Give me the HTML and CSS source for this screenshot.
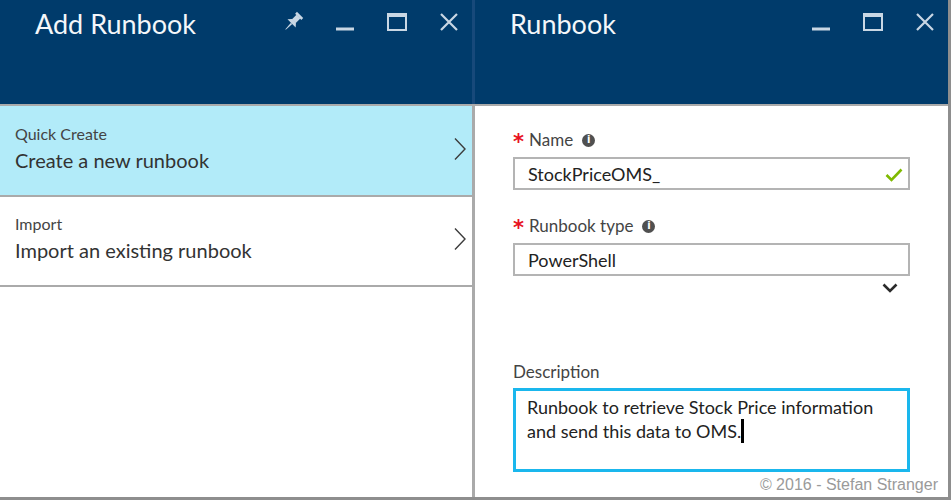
FILE: index.html
```html
<!DOCTYPE html>
<html lang="en">
<head>
<meta charset="utf-8">
<title>Add Runbook</title>
<link rel="stylesheet" href="styles.css">
</head>
<body>
<div class="screen">
  <section class="blade blade-left">
    <header class="bhead">
      <h1 class="btitle">Add Runbook</h1>
      <div class="ctrls">
        <span class="ctrl">
          <svg width="22" height="22" viewBox="0 0 22 22"><g transform="rotate(45 11 11)" fill="#c9d7e4"><rect x="6.6" y="1" width="8.8" height="2.6"/><rect x="8.3" y="3.4" width="5.4" height="6.6"/><polygon points="5.2,13 16.8,13 13.7,9.6 8.3,9.6"/><polygon points="10.1,13 11.9,13 11.3,21.5 10.7,21.5"/></g></svg>
        </span>
        <span class="ctrl">
          <svg width="20" height="20" viewBox="0 0 20 20"><rect x="1" y="15.5" width="18" height="3" fill="#c9d7e4"/></svg>
        </span>
        <span class="ctrl">
          <svg width="22" height="20" viewBox="0 0 22 20"><path d="M1 1h20v18H1z M3 5v12h16V5z" fill="#c9d7e4" fill-rule="evenodd"/></svg>
        </span>
        <span class="ctrl">
          <svg width="20" height="20" viewBox="0 0 20 20"><path d="M2 2L18 18M18 2L2 18" stroke="#c9d7e4" stroke-width="2.2" fill="none"/></svg>
        </span>
      </div>
    </header>
    <ul class="menu">
      <li class="mitem mitem-active">
        <div class="mtext">
          <div class="msub">Quick Create</div>
          <div class="mmain">Create a new runbook</div>
        </div>
        <svg class="chev" width="14" height="24" viewBox="0 0 14 24"><path d="M2 1.5L12 12L2 22.5" stroke="#3c3c3c" stroke-width="1.4" fill="none"/></svg>
      </li>
      <li class="mitem">
        <div class="mtext">
          <div class="msub">Import</div>
          <div class="mmain">Import an existing runbook</div>
        </div>
        <svg class="chev" width="14" height="24" viewBox="0 0 14 24"><path d="M2 1.5L12 12L2 22.5" stroke="#3c3c3c" stroke-width="1.4" fill="none"/></svg>
      </li>
    </ul>
  </section>
  <div class="divider"></div>
  <section class="blade blade-right">
    <header class="bhead">
      <h1 class="btitle">Runbook</h1>
      <div class="ctrls">
        <span class="ctrl">
          <svg width="20" height="20" viewBox="0 0 20 20"><rect x="1" y="15.5" width="18" height="3" fill="#c9d7e4"/></svg>
        </span>
        <span class="ctrl">
          <svg width="22" height="20" viewBox="0 0 22 20"><path d="M1 1h20v18H1z M3 5v12h16V5z" fill="#c9d7e4" fill-rule="evenodd"/></svg>
        </span>
        <span class="ctrl">
          <svg width="20" height="20" viewBox="0 0 20 20"><path d="M2 2L18 18M18 2L2 18" stroke="#c9d7e4" stroke-width="2.2" fill="none"/></svg>
        </span>
      </div>
    </header>
    <form class="form">
      <div class="field">
        <div class="flabel"><span class="req">*</span><span>Name</span><span class="info">i</span></div>
        <div class="finput">
          <span class="fval">StockPriceOMS_</span>
          <svg class="check" width="18" height="14" viewBox="0 0 18 14"><path d="M1.5 7L6.5 12L16.5 1.5" stroke="#7fba00" stroke-width="2.6" fill="none"/></svg>
        </div>
      </div>
      <div class="field">
        <div class="flabel"><span class="req">*</span><span>Runbook type</span><span class="info">i</span></div>
        <div class="finput"><span class="fval">PowerShell</span></div>
        <div class="ddrow">
          <svg width="16" height="10" viewBox="0 0 16 10"><path d="M1.5 1.5L8 8L14.5 1.5" stroke="#2b2b2b" stroke-width="2.6" fill="none"/></svg>
        </div>
      </div>
      <div class="field field-desc">
        <div class="flabel flabel-plain">Description</div>
        <div class="ftext">Runbook to retrieve Stock Price information<br>and send this data to OMS.<span class="caret"></span></div>
      </div>
    </form>
  </section>
  <div class="copy">© 2016 - Stefan Stranger</div>
</div>
</body>
</html>
```
FILE: styles.css
```css
html, body {
  margin: 0;
  padding: 0;
  background: #ffffff;
}
.screen {
  position: relative;
  width: 951px;
  height: 500px;
  box-sizing: border-box;
  display: flex;
  border-right: 3px solid #8e8e8e;
  border-bottom: 3px solid #8e8e8e;
  overflow: hidden;
  font-family: Lato, "Open Sans", sans-serif;
  color: #333;
}
.blade {
  display: flex;
  flex-direction: column;
}
.blade-left { width: 472px; }
.blade-right { flex: 1; }
.divider {
  width: 3px;
  background: linear-gradient(#17497a 0, #17497a 104px, #aaaaaa 104px);
}
.bhead {
  box-sizing: border-box;
  background: #003b6b;
  border-bottom: 2px solid #aaaaaa;
  height: 106px;
  display: flex;
  align-items: flex-start;
  justify-content: space-between;
  padding-left: 35px;
}
.btitle {
  margin: 0;
  padding-top: 7px;
  font-weight: 400;
  font-size: 27px;
  line-height: 34px;
  color: #f4f7fa;
}
.ctrls {
  display: flex;
  gap: 6px;
  padding-top: 11px;
}
.ctrl {
  width: 46px;
  height: 22px;
  display: flex;
  align-items: center;
  justify-content: center;
}
.menu {
  list-style: none;
  margin: 0;
  padding: 0;
}
.mitem {
  height: 91px;
  box-sizing: border-box;
  border-bottom: 2px solid #aaaaaa;
  display: flex;
  align-items: flex-start;
  justify-content: space-between;
  padding: 17px 5px 0 15px;
}
.mitem + .mitem { height: 90px; padding-top: 16px; }
.mitem-active { background: #b2ebf9; }
.msub {
  font-size: 16px;
  line-height: 22px;
  color: #444;
}
.mmain {
  font-size: 20px;
  line-height: 30px;
  color: #333;
}
.chev { margin-top: 14px; }
.form {
  padding: 22px 38px 0 38px;
  display: flex;
  flex-direction: column;
}
.field { display: flex; flex-direction: column; }
.flabel {
  display: flex;
  align-items: center;
  font-size: 17px;
  line-height: 24px;
  color: #444;
  height: 24px;
}
.req {
  color: #e81123;
  font-size: 21px;
  font-weight: 700;
  width: 16px;
  margin-top: 4px;
  font-family: "DejaVu Sans", sans-serif;
}
.info {
  display: inline-flex;
  align-items: center;
  justify-content: center;
  width: 13px;
  height: 13px;
  border-radius: 50%;
  background: #505050;
  color: #fff;
  font-size: 10px;
  font-weight: 700;
  line-height: 1;
  margin-left: 9px;
  font-family: "DejaVu Sans", sans-serif;
}
.finput {
  margin-top: 5px;
  height: 33px;
  box-sizing: border-box;
  border: 2px solid #b4b4b4;
  display: flex;
  align-items: center;
  justify-content: space-between;
  padding: 0 5px 0 13px;
}
.fval {
  font-size: 18px;
  color: #222;
}
.check { margin-top: 2px; }
.field + .field { margin-top: 24px; }
.ddrow {
  display: flex;
  justify-content: flex-end;
  padding: 7px 12px 0 0;
  height: 12px;
}
.field-desc { margin-top: 64px !important; }
.flabel-plain { height: 26px; }
.ftext {
  margin-top: 3px;
  height: 84px;
  box-sizing: border-box;
  border: 3px solid #1ab7ed;
  padding: 4px 11px;
  font-size: 18px;
  line-height: 24px;
  color: #222;
}
.caret {
  display: inline-block;
  width: 3px;
  height: 24px;
  background: #000;
  vertical-align: top;
}
.copy {
  position: absolute;
  right: 10px;
  bottom: 3px;
  font-family: "Liberation Sans", Arial, sans-serif;
  font-size: 16px;
  line-height: 18px;
  color: #9a9a9a;
}
```
